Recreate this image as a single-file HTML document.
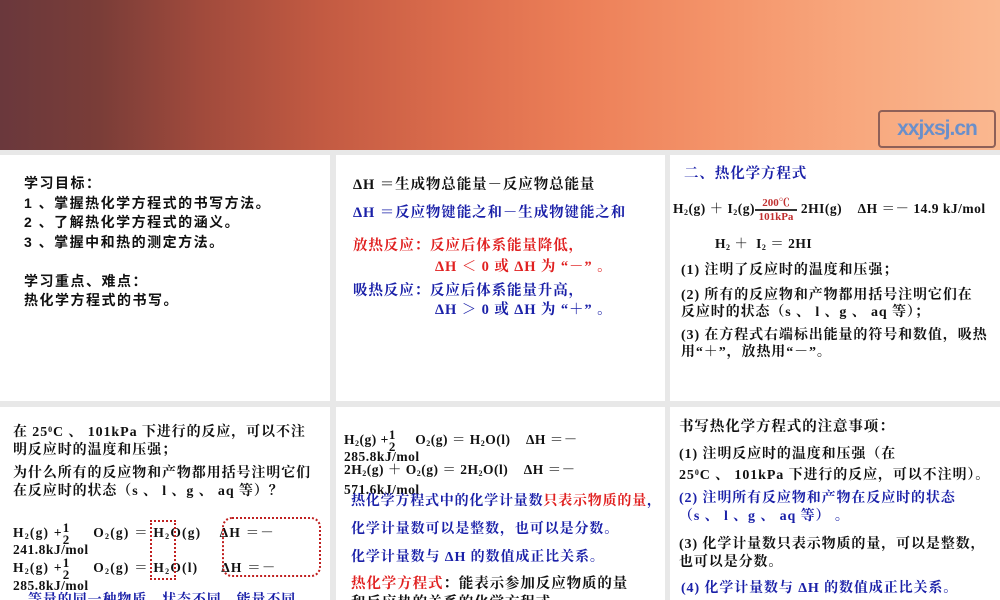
<!DOCTYPE html>
<html><head><meta charset="utf-8">
<style>
*{margin:0;padding:0;box-sizing:border-box}
html,body{width:1000px;height:600px;overflow:hidden}
body{background:#e8e8e8;position:relative;font-family:"Liberation Serif","Noto Serif CJK SC",serif;font-weight:bold;color:#111}
.ban{position:absolute;left:0;top:0;width:1000px;height:150px;
background:linear-gradient(90deg,#6a383c 0%,#7a3d38 10%,#a04a3c 20%,#c25a42 32%,#db6c4c 45%,#ec7f58 58%,#f4946a 72%,#f8a87e 86%,#fab890 100%)}
.wm{position:absolute;left:878px;top:110px;width:118px;height:38px;border:2px solid #8e6058;border-radius:4px;color:#6a8fca;font:bold 21px "Liberation Sans",sans-serif;text-align:center;line-height:34px;letter-spacing:-1px}
.p{position:absolute;background:#fff;overflow:hidden}
.t{position:absolute;white-space:nowrap;font-size:14px;line-height:17px;letter-spacing:0.9px}
.e{letter-spacing:.5px;font-size:13.5px}
.s{font-family:"Liberation Sans","Noto Sans CJK SC",sans-serif}
.b{color:#1a20a8}.r{color:#e02020}
sub{font-size:8px;vertical-align:-2px}
sup{font-size:8px;vertical-align:4px}
.fr{display:inline-block;vertical-align:middle;text-align:center;line-height:12px;font-size:13px}
</style></head><body>
<div class="ban"></div>
<div class="wm">xxjxsj.cn</div>

<div class="p" style="left:0;top:155px;width:330px;height:246px"></div>
<div class="p" style="left:336px;top:155px;width:329px;height:246px"></div>
<div class="p" style="left:670px;top:155px;width:330px;height:246px"></div>
<div class="p" style="left:0;top:407px;width:330px;height:193px"></div>
<div class="p" style="left:336px;top:407px;width:329px;height:193px"></div>
<div class="p" style="left:670px;top:407px;width:330px;height:193px"></div>

<!-- panel 1 -->
<div class="t s" style="left:24px;top:174px;line-height:19.5px;font-size:14px;letter-spacing:1.5px">学习目标：<br>1 、掌握热化学方程式的书写方法。<br>2 、了解热化学方程式的涵义。<br>3 、掌握中和热的测定方法。<br><br>学习重点、难点：<br>热化学方程式的书写。</div>

<!-- panel 2 -->
<div class="t" style="left:353px;top:177px;font-size:14.5px">ΔH ＝生成物总能量－反应物总能量</div>
<div class="t b" style="left:353px;top:205px;font-size:14.5px">ΔH ＝反应物键能之和－生成物键能之和</div>
<div class="t r" style="left:353px;top:238px;font-size:14.5px">放热反应：反应后体系能量降低，</div>
<div class="t r" style="left:435px;top:259px;font-size:14.5px">ΔH ＜ 0 或 ΔH 为 “－” 。</div>
<div class="t b" style="left:353px;top:283px;font-size:14.5px">吸热反应：反应后体系能量升高，</div>
<div class="t b" style="left:435px;top:302px;font-size:14.5px">ΔH ＞ 0 或 ΔH 为 “＋” 。</div>

<!-- panel 3 -->
<div class="t b" style="left:684px;top:166px;font-size:14.5px">二、热化学方程式</div>
<div class="t e" style="left:673px;top:197px">H<sub>2</sub>(g) ＋ I<sub>2</sub>(g)<span style="display:inline-block;vertical-align:middle;text-align:center;color:#c03030;font-size:11px;line-height:12px;width:42px;letter-spacing:0"><span style="border-bottom:2px solid #333;display:block">200℃</span>101kPa</span> 2HI(g)&nbsp;&nbsp;&nbsp;&nbsp;ΔH ＝－ 14.9 kJ/mol</div>
<div class="t e" style="left:715px;top:235px">H<sub>2</sub> ＋&nbsp; I<sub>2</sub> ＝ 2HI</div>
<div class="t" style="left:681px;top:262px">(1) 注明了反应时的温度和压强；</div>
<div class="t" style="left:681px;top:287px">(2) 所有的反应物和产物都用括号注明它们在<br>反应时的状态（s 、 l 、g 、 aq 等）；</div>
<div class="t" style="left:681px;top:327px">(3) 在方程式右端标出能量的符号和数值，吸热<br>用“＋”，放热用“－”。</div>

<!-- panel 4 -->
<div class="t" style="left:13px;top:421px;line-height:18px">在 25<sup>0</sup>C 、 101kPa 下进行的反应，可以不注<br>明反应时的温度和压强；</div>
<div class="t" style="left:13px;top:465px;line-height:18px">为什么所有的反应物和产物都用括号注明它们<br>在反应时的状态（s 、 l 、g 、 aq 等）？</div>
<div class="t e" style="left:13px;top:522px;letter-spacing:1.2px">H<sub>2</sub>(g) +<span class="fr">1<br>2</span>&nbsp;&nbsp;&nbsp;&nbsp; O<sub>2</sub>(g) ＝ H<sub>2</sub>O(g)&nbsp;&nbsp;&nbsp; ΔH ＝－</div>
<div class="t e" style="left:13px;top:541px">241.8kJ/mol</div>
<div class="t e" style="left:13px;top:557px;letter-spacing:1.2px">H<sub>2</sub>(g) +<span class="fr">1<br>2</span>&nbsp;&nbsp;&nbsp;&nbsp; O<sub>2</sub>(g) ＝ H<sub>2</sub>O(l)&nbsp;&nbsp;&nbsp;&nbsp; ΔH ＝－</div>
<div class="t e" style="left:13px;top:577px">285.8kJ/mol</div>
<div class="t b" style="left:28px;top:592px">等量的同一种物质，状态不同，能量不同。</div>
<div style="position:absolute;left:150px;top:520px;width:26px;height:60px;border:2px dotted #c02020"></div>
<div style="position:absolute;left:222px;top:517px;width:99px;height:60px;border:2px dotted #c02020;border-radius:10px"></div>

<!-- panel 5 -->
<div class="t e" style="left:344px;top:429px">H<sub>2</sub>(g) +<span class="fr">1<br>2</span>&nbsp;&nbsp;&nbsp;&nbsp; O<sub>2</sub>(g) ＝ H<sub>2</sub>O(l)&nbsp;&nbsp;&nbsp; ΔH ＝－</div>
<div class="t e" style="left:344px;top:448px">285.8kJ/mol</div>
<div class="t e" style="left:344px;top:461px">2H<sub>2</sub>(g) ＋ O<sub>2</sub>(g) ＝ 2H<sub>2</sub>O(l)&nbsp;&nbsp;&nbsp; ΔH ＝－</div>
<div class="t e" style="left:344px;top:481px">571.6kJ/mol</div>
<div class="t b" style="left:351px;top:493px;letter-spacing:0.8px">热化学方程式中的化学计量数<span class="r">只表示物质的量</span>，</div>
<div class="t b" style="left:351px;top:521px">化学计量数可以是整数，也可以是分数。</div>
<div class="t b" style="left:351px;top:549px">化学计量数与 ΔH 的数值成正比关系。</div>
<div class="t" style="left:351px;top:576px;font-size:14.5px"><span class="r">热化学方程式</span>：能表示参加反应物质的量</div>
<div class="t" style="left:351px;top:595px;font-size:14.5px">和反应热的关系的化学方程式</div>

<!-- panel 6 -->
<div class="t" style="left:679px;top:419px;font-size:14.5px">书写热化学方程式的注意事项：</div>
<div class="t" style="left:679px;top:446px;line-height:18px">(1) 注明反应时的温度和压强（在<br>25<sup>0</sup>C 、 101kPa 下进行的反应，可以不注明）。</div>
<div class="t b" style="left:679px;top:490px;line-height:18px">(2) 注明所有反应物和产物在反应时的状态<br>（s 、 l 、g 、 aq 等） 。</div>
<div class="t" style="left:679px;top:536px;line-height:18px">(3) 化学计量数只表示物质的量，可以是整数，<br>也可以是分数。</div>
<div class="t b" style="left:681px;top:580px">(4) 化学计量数与 ΔH 的数值成正比关系。</div>
</body></html>
